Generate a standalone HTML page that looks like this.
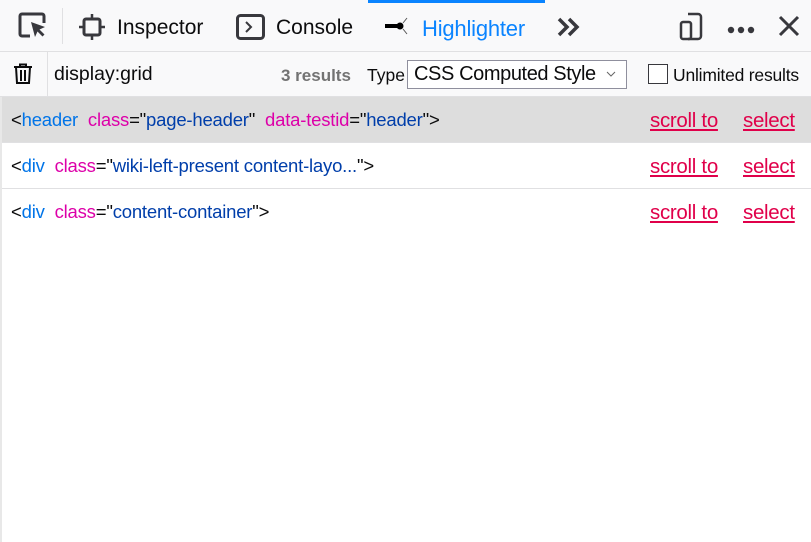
<!DOCTYPE html>
<html><head><style>
body{margin:0;width:811px;height:542px;background:#fff;font-family:"Liberation Sans",sans-serif;position:relative;overflow:hidden;color:#0c0c0d}
.a{position:absolute;white-space:nowrap}
.tb{position:absolute;left:0;top:0;width:811px;height:51px;background:#f9f9fa;border-bottom:1px solid #e0e0e2}
.r2{position:absolute;left:0;top:52px;width:811px;height:44px;background:#f9f9fa;border-bottom:1px solid #e0e0e2}
.row{position:absolute;left:2px;width:809px;height:45px;border-bottom:1px solid #e0e0e2;font-size:18.5px}
.row span.t{position:absolute;left:9px;top:12px;letter-spacing:-0.2px}
.tag{color:#0074e8}.at{color:#dd00a9}.v{color:#003eaa}
.lk{position:absolute;top:12px;color:#e0004a;text-decoration:underline;font-size:20.5px;letter-spacing:-0.3px}
</style></head><body>
<div class="tb"></div>
<div class="a" style="left:368px;top:0;width:177px;height:3px;background:#0a84ff"></div>
<svg class="a" style="left:18px;top:12px" width="30" height="28" viewBox="0 0 30 28"><path d="M12 24H4a2 2 0 0 1-2-2V4a2 2 0 0 1 2-2h20a2 2 0 0 1 2 2v7" fill="none" stroke="#38383d" stroke-width="3"/><path d="M13 10l4 15 2.5-5.5 5 5 2-2-5-5 5.5-2.5z" fill="#38383d"/></svg>
<div class="a" style="left:62px;top:8px;width:1px;height:36px;background:#e0e0e2"></div>
<svg class="a" style="left:78px;top:13px" width="28" height="28" viewBox="0 0 28 28"><rect x="6" y="6" width="16" height="16" rx="2" fill="none" stroke="#38383d" stroke-width="3"/><path d="M14 1v5M14 22v5M1 14h5M22 14h5" stroke="#38383d" stroke-width="2.5"/></svg>
<div class="a" style="left:117px;top:16px;font-size:21px;color:#0c0c0d">Inspector</div>
<svg class="a" style="left:236px;top:14px" width="30" height="26" viewBox="0 0 30 26"><rect x="1.5" y="1.5" width="26" height="23" rx="3" fill="none" stroke="#38383d" stroke-width="3"/><path d="M10 8l5 5-5 5" fill="none" stroke="#38383d" stroke-width="2"/></svg>
<div class="a" style="left:276px;top:16px;font-size:21px">Console</div>
<svg class="a" style="left:384px;top:15px" width="28" height="20" viewBox="0 0 28 20"><path d="M1 11h15" stroke="#000" stroke-width="4"/><circle cx="16" cy="11" r="3.5" fill="#000"/><path d="M19 8l4-5M19 14l4 5" stroke="#555" stroke-width="1"/></svg>
<div class="a" style="left:422px;top:16px;font-size:22px;color:#0a84ff;letter-spacing:-0.2px">Highlighter</div>
<svg class="a" style="left:557px;top:17px" width="26" height="20" viewBox="0 0 26 20"><path d="M2 2l8 8-8 8M12 2l8 8-8 8" fill="none" stroke="#38383d" stroke-width="3.5"/></svg>
<svg class="a" style="left:679px;top:11px" width="30" height="30" viewBox="0 0 30 30"><path d="M9 3h10a3 3 0 0 1 3 3v19a3 3 0 0 1-3 3H9" fill="none" stroke="#38383d" stroke-width="2.5"/><rect x="2" y="11" width="10" height="17" rx="2" fill="none" stroke="#38383d" stroke-width="2.5"/></svg>
<div class="a" style="left:727px;top:21px"><svg width="30" height="8"><circle cx="4" cy="4" r="3.2" fill="#38383d"/><circle cx="14" cy="4" r="3.2" fill="#38383d"/><circle cx="24" cy="4" r="3.2" fill="#38383d"/></svg></div>
<svg class="a" style="left:778px;top:15px" width="22" height="22"><path d="M2 2l18 18M20 2L2 20" stroke="#38383d" stroke-width="3"/></svg>
<div class="r2"></div>
<div class="a" style="left:47px;top:52px;width:1px;height:44px;background:#e0e0e2"></div>
<svg class="a" style="left:13px;top:63px" width="20" height="22" viewBox="0 0 20 22"><path d="M1 4h18M7 4V1.5h6V4M3 4l1 16h12l1-16M8 7v11M12 7v11" fill="none" stroke="#0c0c0d" stroke-width="2"/></svg>
<div class="a" style="left:54px;top:63px;font-size:19.5px">display:grid</div>
<div class="a" style="left:281px;top:66px;font-size:17px;font-weight:bold;color:#737373">3 results</div>
<div class="a" style="left:367px;top:65px;font-size:17.5px">Type</div>
<div class="a" style="left:407px;top:60px;width:218px;height:27px;border:1px solid #8f8f9d;background:#fff"></div>
<div class="a" style="left:414px;top:63px;font-size:20px;letter-spacing:-0.4px">CSS Computed Style</div>
<svg class="a" style="left:606px;top:71px" width="10" height="6"><path d="M1 1l4 4 4-4" fill="none" stroke="#666" stroke-width="1"/></svg>
<div class="a" style="left:648px;top:64px;width:18px;height:18px;border:1px solid #38383d;background:#fff"></div>
<div class="a" style="left:673px;top:65px;font-size:17.5px;letter-spacing:-0.2px">Unlimited results</div>
<div class="a" style="left:0;top:97px;width:2px;height:445px;background:#e8e8e8"></div>
<div class="row" style="top:97px;background:#ddd"><span class="t">&lt;<span class="tag">header</span>&nbsp; <span class="at">class</span>="<span class="v">page-header</span>"&nbsp; <span class="at">data-testid</span>="<span class="v">header</span>"&gt;</span><span class="lk" style="left:648px">scroll to</span><span class="lk" style="left:741px">select</span></div>
<div class="row" style="top:143px"><span class="t">&lt;<span class="tag">div</span>&nbsp; <span class="at">class</span>="<span class="v">wiki-left-present content-layo...</span>"&gt;</span><span class="lk" style="left:648px">scroll to</span><span class="lk" style="left:741px">select</span></div>
<div class="row" style="top:189px;border-bottom:none"><span class="t">&lt;<span class="tag">div</span>&nbsp; <span class="at">class</span>="<span class="v">content-container</span>"&gt;</span><span class="lk" style="left:648px">scroll to</span><span class="lk" style="left:741px">select</span></div>
</body></html>
